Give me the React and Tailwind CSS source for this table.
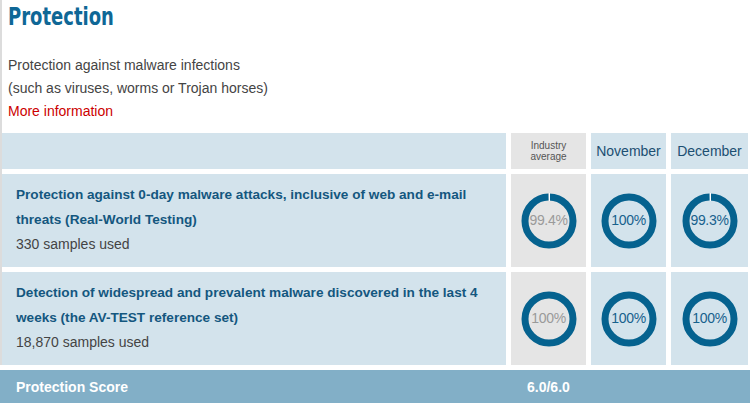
const rows = [
  {
    title: 'Protection against 0-day malware attacks, inclusive of web and e-mail threats (Real-World Testing)',
    samples: '330 samples used',
    values: [99.4, 100, 99.3],
  },
  {
    title: 'Detection of widespread and prevalent malware discovered in the last 4 weeks (the AV-TEST reference set)',
    samples: '18,870 samples used',
    values: [100, 100, 100],
  },
]

function Ring({ value, muted }) {
  const r = 24
  const c = 2 * Math.PI * r
  const filled = (value / 100) * c
  const gap = value >= 100 ? 0 : Math.max(1.5, c - filled)
  return (
    <div className="relative w-[56px] h-[56px]">
      <svg width="56" height="56" viewBox="0 0 56 56" className="absolute inset-0">
        <circle
          cx="28"
          cy="28"
          r={r}
          fill="none"
          stroke="#05628f"
          strokeWidth="7"
          strokeDasharray={gap ? `${c - gap} ${gap}` : undefined}
          transform="rotate(-90 28 28)"
        />
        {gap > 0 && <line x1="28.5" y1="0" x2="28.5" y2="8" stroke="#ffffff" strokeWidth="1" />}
      </svg>
      <div className={`absolute inset-0 flex items-center justify-center text-[14px] tracking-[-0.3px] ${muted ? 'text-[#9a9a9a]' : 'text-[#17618c]'}`}>
        {value === 100 ? '100' : value.toFixed(1)}%
      </div>
    </div>
  )
}

export default function App() {
  return (
    <div className="w-[750px] h-[403px] overflow-hidden bg-white font-['Liberation_Sans',Arial,sans-serif]">
      <div className="border-l-2 border-[#dcdcdc]">
        <div className="h-[54px] pl-[6px] pt-[2px]">
          <h1 className="origin-left scale-x-[0.8] text-[25px] leading-[30px] font-bold text-[#0f6796] font-['DejaVu_Sans_Condensed','DejaVu_Sans',sans-serif]">
            Protection
          </h1>
        </div>
        <div className="pl-[6px] text-[14px] leading-[23px] text-[#444]">
          <p>Protection against malware infections</p>
          <p>(such as viruses, worms or Trojan horses)</p>
          <p className="text-[#cc0000]">More information</p>
        </div>

        <div className="mt-[10px] flex flex-col gap-[5px]">
          <div className="flex h-[36px] gap-[5px]">
            <div className="w-[504px] bg-[#d3e3ec]" />
            <div className="w-[75px] bg-[#e5e5e5] flex items-center justify-center text-center text-[10px] leading-[11px] text-[#555]">
              Industry<br />average
            </div>
            <div className="w-[75px] bg-[#d3e3ec] flex items-center justify-center text-[14px] text-[#1c4f72]">
              November
            </div>
            <div className="w-[77px] bg-[#d3e3ec] flex items-center justify-center text-[14px] text-[#1c4f72]">
              December
            </div>
          </div>

          {rows.map((row) => (
            <div key={row.samples} className="flex h-[93px] gap-[5px]">
              <div className="w-[504px] bg-[#d3e3ec] pl-[14px] pr-[20px] pt-[8px] leading-[25px]">
                <p className="font-bold text-[13.6px] text-[#14577f]">{row.title}</p>
                <p className="text-[#444] text-[14px]">{row.samples}</p>
              </div>
              {row.values.map((v, i) => (
                <div
                  key={i}
                  className={`${i === 2 ? 'w-[77px]' : 'w-[75px]'} ${i === 0 ? 'bg-[#e5e5e5]' : 'bg-[#d3e3ec]'} flex items-center justify-center`}
                >
                  <Ring value={v} muted={i === 0} />
                </div>
              ))}
            </div>
          ))}
        </div>
      </div>

      <div className="mt-[5px] h-[35px] bg-[#82afc7] flex items-center text-white font-bold text-[14px]">
        <div className="w-[511px] pl-[16px]">Protection Score</div>
        <div className="pl-[16px]">6.0/6.0</div>
      </div>
    </div>
  )
}
